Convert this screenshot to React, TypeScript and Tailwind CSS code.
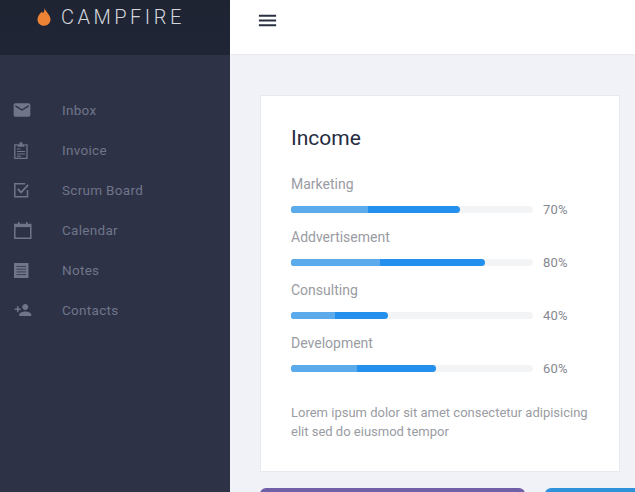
import { MdEmail, MdMenu, MdPersonAdd } from "react-icons/md"

function ClipboardIcon() {
  return (
    <svg width="14" height="17" viewBox="0 0 14 17" fill="none" stroke="currentColor">
      <path d="M3.500 2.800H.8v13.500h12.200V2.800H10.500" strokeWidth="1.300" />
      <path d="M3.800 4.400V2.400h2V.6h2.400v1.800h2v2z" fill="currentColor" strokeWidth="0.500" />
      <path d="M3 7h3.500M3 9.500h8M3 12h8M3 14.200h4" strokeWidth="1.100" />
    </svg>
  )
}

function CheckIcon() {
  return (
    <svg width="15" height="16" viewBox="0 0 15 16" fill="none" stroke="currentColor" strokeWidth="1.500">
      <path d="M13.500 8v6.800H.8V1.800h10.500" />
      <path d="M3.800 7l3.300 3.400L14.200 2.800" strokeWidth="1.800" />
    </svg>
  )
}

function CalendarIcon() {
  return (
    <svg width="18" height="17" viewBox="0 0 18 17" fill="none" stroke="currentColor">
      <path d="M.8 2.500h16v13.700H.8z" strokeWidth="1.500" />
      <path d="M.8 4h16" strokeWidth="2.200" />
      <path d="M4.800 0v3M12.800 0v3" strokeWidth="1.600" />
    </svg>
  )
}

function NotesIcon() {
  return (
    <svg width="15" height="15" viewBox="0 0 15 15">
      <path d="M0 0h14.500v15H0z" fill="currentColor" />
      <path d="M2.500 3.500h9.500M2.500 6.200h9.500M2.500 8.900h9.500M2.500 11.600h9.500" stroke="#2d3246" strokeWidth="0.800" />
    </svg>
  )
}

const navItems = [
  { label: "Inbox", icon: <MdEmail size={22} className="-ml-0.5 -mt-px" /> },
  { label: "Invoice", icon: <ClipboardIcon /> },
  { label: "Scrum Board", icon: <CheckIcon /> },
  { label: "Calendar", icon: <CalendarIcon /> },
  { label: "Notes", icon: <NotesIcon /> },
  { label: "Contacts", icon: <MdPersonAdd size={20} /> },
]

const incomeRows = [
  { label: "Marketing", value: "70%", fill: "w-[169px]", light: "w-[77px]" },
  { label: "Addvertisement", value: "80%", fill: "w-[194px]", light: "w-[89px]" },
  { label: "Consulting", value: "40%", fill: "w-[97px]", light: "w-[44px]" },
  { label: "Development", value: "60%", fill: "w-[145px]", light: "w-[66px]" },
]

export default function App() {
  return (
    <div className="flex h-[492px] w-[635px] overflow-hidden bg-[#f0f2f7] font-['Roboto',sans-serif]">
      {/* Sidebar */}
      <aside className="w-[230px] shrink-0 bg-[#2d3246]">
        <div className="flex h-[55px] items-start gap-[10px] bg-gradient-to-b from-[#1f2433] to-[#1f2535] pl-[37px] pt-[4px]">
          <svg width="14" height="18" viewBox="0 0 14 18" className="mt-[4px]">
            <path
              d="M7.400 0c.6 3-1 4-1.300 5.300-.7-.4-1-1.100-1-1.900C2.500 5.800.5 8 .5 11.500c0 3.800 3 6.300 6.500 6.300s6.500-2.500 6.500-6.200C13.500 7.200 9.500 4.800 7.400 0z"
              fill="#ee8336"
            />
          </svg>
          <span className="text-[20px] leading-[26px] font-light tracking-[3.500px] text-[#d4d6dc]">CAMPFIRE</span>
        </div>
        <nav className="pt-[35px]">
          {navItems.map((item) => (
            <a key={item.label} href="#" className="flex h-10 items-center gap-[30px] pl-[14px] text-[#70758a]">
              <span className="flex w-[18px] shrink-0 items-center">{item.icon}</span>
              <span className="text-[13.5px] leading-[20px] tracking-[0.3px]">{item.label}</span>
            </a>
          ))}
        </nav>
      </aside>

      <div className="min-w-0 flex-1">
        {/* Top bar */}
        <header className="flex h-[55px] items-start border-b border-[#e9ebef] bg-white pl-[26px] pt-[9px]">
          <MdMenu size={23} className="text-[#2a3042]" />
        </header>

        {/* Income card */}
        <main className="px-[30px] pt-[40px]">
          <section className="h-[377px] w-[360px] border border-[#e8eaef] bg-white px-[30px] pt-[28px]">
            <h2 className="text-[21px] leading-[28px] text-[#252b40]">Income</h2>
            <div className="mt-[22px] flex flex-col">
              {incomeRows.map((row) => (
                <div key={row.label} className="h-[53px]">
                  <p className="text-[14px] leading-[20px] text-[#9a9ca3]">{row.label}</p>
                  <div className="mt-[5px] flex items-center">
                    <div className="h-[7px] w-[242px] rounded-full bg-[#f3f4f6]">
                      <div className={`h-full overflow-hidden rounded-full bg-[#2490ee] ${row.fill}`}>
                        <div className={`h-full bg-[#5baaec] ${row.light}`} />
                      </div>
                    </div>
                    <span className="ml-[10px] pt-px text-[13px] leading-[20px] tracking-[0.2px] text-[#85878f]">{row.value}</span>
                  </div>
                </div>
              ))}
            </div>
            <p className="mt-[17px] text-[13px] leading-[19px] text-[#9a9ca3]">
              Lorem ipsum dolor sit amet consectetur adipisicing elit sed do eiusmod tempor
            </p>
          </section>

          {/* Cards below the fold */}
          <div className="mt-[16px] flex gap-[20px]">
            <div className="h-[60px] w-[265px] shrink-0 rounded-t-[6px] bg-[#6f60a8]" />
            <div className="h-[60px] w-[265px] shrink-0 rounded-t-[6px] bg-[#2f93dc]" />
          </div>
        </main>
      </div>
    </div>
  )
}
